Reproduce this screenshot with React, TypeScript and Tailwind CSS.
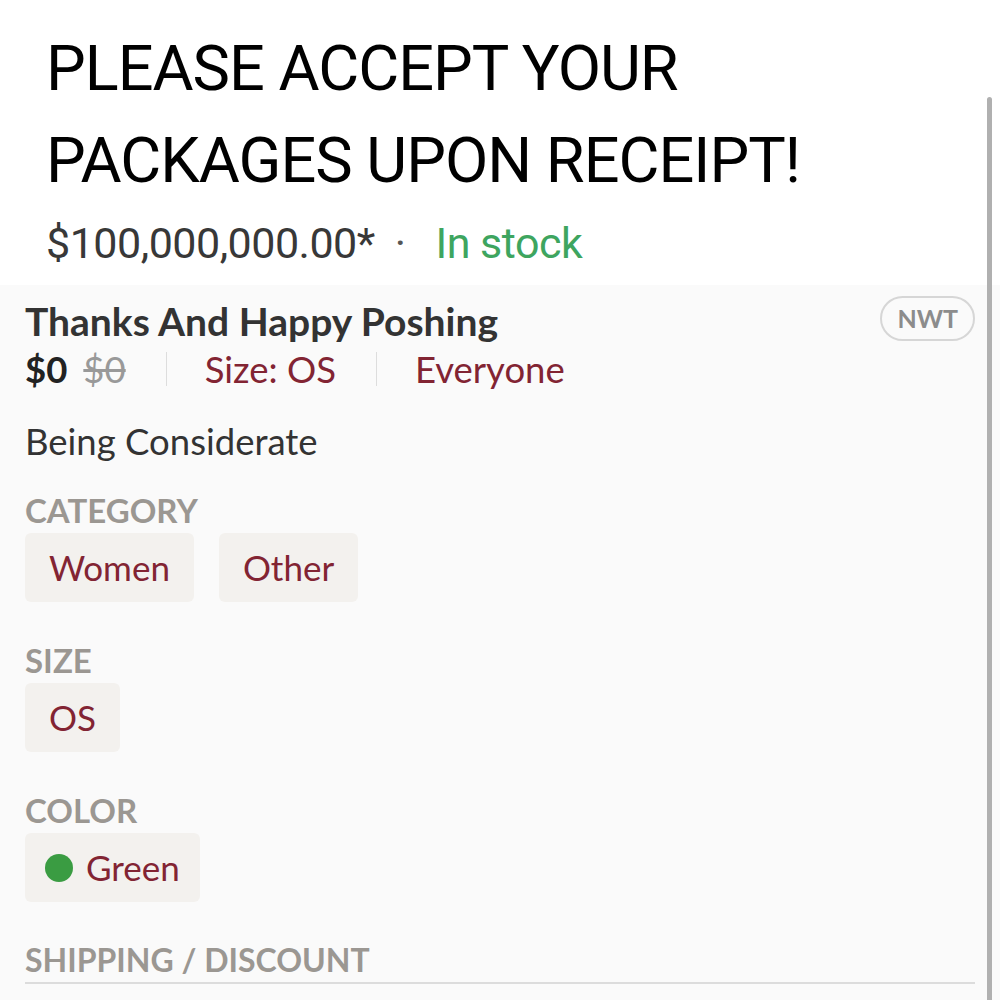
export default function App() {
  const sans = { fontFamily: '"Lato", "Open Sans", sans-serif' };
  return (
    <div className="relative h-[1000px] w-[1000px] overflow-hidden bg-[#fafafa]" style={sans}>
      <div className="bg-white px-[46px] pt-[23px] pb-[14px]" style={{ fontFamily: 'Roboto, sans-serif' }}>
        <h1 className="text-[63px] leading-[92px] tracking-[-1px] text-black">
          PLEASE ACCEPT YOUR
          <br />
          PACKAGES UPON RECEIPT!
        </h1>
        <div className="mt-[8px] flex items-center text-[43px] leading-[56px] tracking-[-0.5px]">
          <span className="text-[#383838]">$100,000,000.00*</span>
          <span className="ml-[20px] mr-[30px] text-[#555]">·</span>
          <span className="text-[#3ea55f]">In stock</span>
        </div>
      </div>

      <div className="px-[25px] pt-[14px]">
        <div className="flex items-start justify-between">
          <div>
            <div className="text-[39px] font-bold leading-[44px] text-[#333]">Thanks And Happy Poshing</div>
            <div className="mt-[4px] flex items-center text-[36.5px] leading-[44px]">
              <span className="font-bold text-[#222]">$0</span>
              <span className="ml-[16px] text-[#999] line-through">$0</span>
              <span className="ml-[40px] mr-[38px] h-[34px] w-px bg-[#ddd]" />
              <span className="text-[#822433]">Size: OS</span>
              <span className="ml-[40px] mr-[38px] h-[34px] w-px bg-[#ddd]" />
              <span className="text-[#822433]">Everyone</span>
            </div>
          </div>
          <div className="-mt-[3px] rounded-full border-2 border-[#d6d6d6] px-[15px] py-[2px] text-[25px] font-bold leading-[37px] text-[#8c8c8c]">
            NWT
          </div>
        </div>

        <div className="mt-[28px] text-[36.5px] leading-[44px] text-[#333]">Being Considerate</div>

        <div className="mt-[27px] text-[33px] font-bold leading-[40px] text-[#9b9792]">CATEGORY</div>
        <div className="mt-[3px] flex gap-[25px]">
          <div className="rounded-[6px] bg-[#f3f1ee] px-[24px] py-[11px] text-[35px] leading-[47px] text-[#822433]">Women</div>
          <div className="rounded-[6px] bg-[#f3f1ee] px-[24px] py-[11px] text-[35px] leading-[47px] text-[#822433]">Other</div>
        </div>

        <div className="mt-[38px] text-[33px] font-bold leading-[40px] text-[#9b9792]">SIZE</div>
        <div className="mt-[3px] flex">
          <div className="rounded-[6px] bg-[#f3f1ee] px-[24px] py-[11px] text-[35px] leading-[47px] text-[#822433]">OS</div>
        </div>

        <div className="mt-[38px] text-[33px] font-bold leading-[40px] text-[#9b9792]">COLOR</div>
        <div className="mt-[3px] flex">
          <div className="flex items-center gap-[13px] rounded-[6px] bg-[#f3f1ee] px-[20px] py-[11px] text-[35px] leading-[47px] text-[#822433]">
            <span className="h-[28px] w-[28px] rounded-full bg-[#3a9c42]" />
            Green
          </div>
        </div>

        <div className="mt-[38px] border-b-2 border-[#dcdcdc] pb-[2px] text-[32px] font-bold leading-[40px] text-[#9b9792]">
          SHIPPING / DISCOUNT
        </div>
      </div>

      <div className="absolute right-[8px] top-[97px] h-[920px] w-[5px] rounded-full bg-[#b0b0b0]" />
    </div>
  );
}
